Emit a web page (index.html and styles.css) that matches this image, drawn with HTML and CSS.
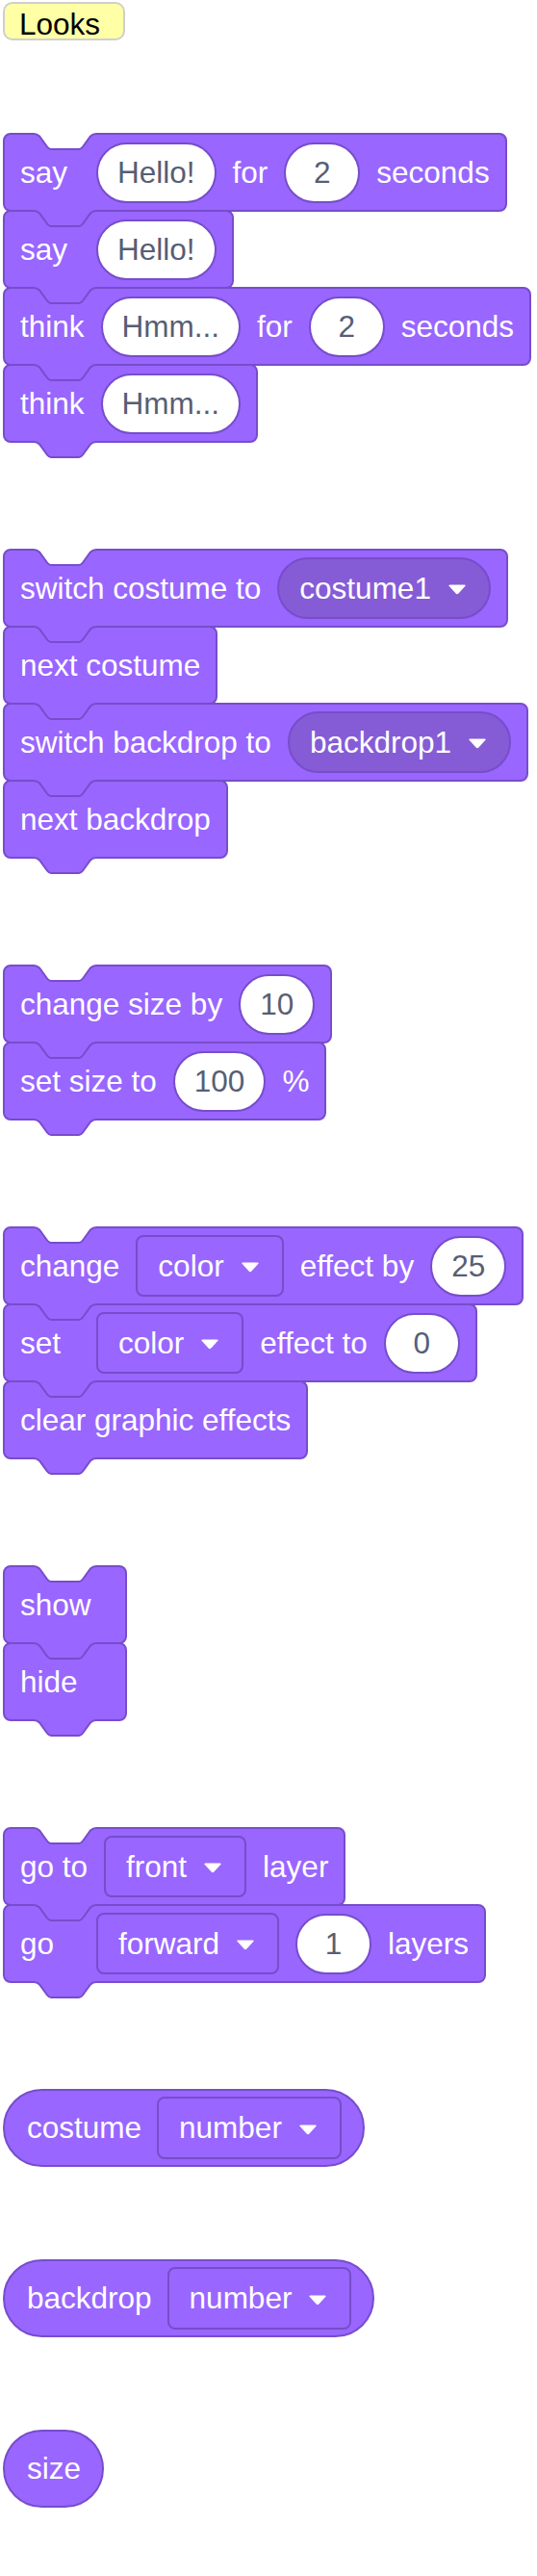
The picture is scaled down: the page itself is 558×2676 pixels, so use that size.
FILE: index.html
```html
<!DOCTYPE html>
<html lang="en">
<head>
<meta charset="utf-8">
<title>Looks</title>
<link rel="stylesheet" href="styles.css">
</head>
<body>
<svg class="defs" width="0" height="0" aria-hidden="true">
  <defs>
    <symbol id="notch" viewBox="0 -2 76 22">
      <path d="M5 -2 L5 1 C8 1 9.5 2 11 3.5 L19 14.5 C20.3 16.3 21 17 23 17 H52 C54 17 54.7 16.3 56 14.5 L64 3.5 C65.5 2 67 1 70 1 L70 -2 Z" fill="#ffffff"/>
      <path d="M4 1 H5 C8 1 9.5 2 11 3.5 L19 14.5 C20.3 16.3 21 17 23 17 H52 C54 17 54.7 16.3 56 14.5 L64 3.5 C65.5 2 67 1 70 1 H71" fill="none" stroke="#774dcb" stroke-width="2"/>
    </symbol>
    <symbol id="tab" viewBox="0 -2 76 22">
      <path d="M5 -1 L5 1 C8 1 9.5 2 11 3.5 L19 14.5 C20.3 16.3 21 17 23 17 H52 C54 17 54.7 16.3 56 14.5 L64 3.5 C65.5 2 67 1 70 1 L70 -1 Z" fill="#9966ff"/>
      <path d="M4 1 H5 C8 1 9.5 2 11 3.5 L19 14.5 C20.3 16.3 21 17 23 17 H52 C54 17 54.7 16.3 56 14.5 L64 3.5 C65.5 2 67 1 70 1 H71" fill="none" stroke="#774dcb" stroke-width="2"/>
    </symbol>
    <symbol id="arrow" viewBox="0 0 20 12">
      <path d="M2.5 1.5 H17.5 Q19.6 1.5 18.2 3.1 L11.4 10.6 Q10 12 8.6 10.6 L1.8 3.1 Q0.4 1.5 2.5 1.5 Z" fill="#ffffff"/>
    </symbol>
  </defs>
</svg>

<div class="page">
  <div class="category">Looks</div>

  <div class="stack">
    <div class="block">
      <svg class="notch"><use href="#notch"/></svg>
      <span class="label lead">say</span>
      <span class="oval">Hello!</span>
      <span class="label">for</span>
      <span class="oval">2</span>
      <span class="label">seconds</span>
      <svg class="tab"><use href="#tab"/></svg>
    </div>
    <div class="block">
      <span class="label lead">say</span>
      <span class="oval">Hello!</span>
      <svg class="tab"><use href="#tab"/></svg>
    </div>
    <div class="block">
      <span class="label lead">think</span>
      <span class="oval">Hmm...</span>
      <span class="label">for</span>
      <span class="oval">2</span>
      <span class="label">seconds</span>
      <svg class="tab"><use href="#tab"/></svg>
    </div>
    <div class="block">
      <span class="label lead">think</span>
      <span class="oval">Hmm...</span>
      <svg class="tab"><use href="#tab"/></svg>
    </div>
  </div>

  <div class="stack">
    <div class="block">
      <svg class="notch"><use href="#notch"/></svg>
      <span class="label lead">switch costume to</span>
      <span class="dd round"><span>costume1</span><svg class="arrow"><use href="#arrow"/></svg></span>
      <svg class="tab"><use href="#tab"/></svg>
    </div>
    <div class="block">
      <span class="label">next costume</span>
      <svg class="tab"><use href="#tab"/></svg>
    </div>
    <div class="block">
      <span class="label lead">switch backdrop to</span>
      <span class="dd round"><span>backdrop1</span><svg class="arrow"><use href="#arrow"/></svg></span>
      <svg class="tab"><use href="#tab"/></svg>
    </div>
    <div class="block">
      <span class="label">next backdrop</span>
      <svg class="tab"><use href="#tab"/></svg>
    </div>
  </div>

  <div class="stack">
    <div class="block">
      <svg class="notch"><use href="#notch"/></svg>
      <span class="label lead">change size by</span>
      <span class="oval">10</span>
      <svg class="tab"><use href="#tab"/></svg>
    </div>
    <div class="block">
      <span class="label lead">set size to</span>
      <span class="oval">100</span>
      <span class="label">%</span>
      <svg class="tab"><use href="#tab"/></svg>
    </div>
  </div>

  <div class="stack">
    <div class="block">
      <svg class="notch"><use href="#notch"/></svg>
      <span class="label lead">change</span>
      <span class="dd"><span>color</span><svg class="arrow"><use href="#arrow"/></svg></span>
      <span class="label">effect by</span>
      <span class="oval">25</span>
      <svg class="tab"><use href="#tab"/></svg>
    </div>
    <div class="block">
      <span class="label lead">set</span>
      <span class="dd"><span>color</span><svg class="arrow"><use href="#arrow"/></svg></span>
      <span class="label">effect to</span>
      <span class="oval">0</span>
      <svg class="tab"><use href="#tab"/></svg>
    </div>
    <div class="block">
      <span class="label">clear graphic effects</span>
      <svg class="tab"><use href="#tab"/></svg>
    </div>
  </div>

  <div class="stack">
    <div class="block">
      <svg class="notch"><use href="#notch"/></svg>
      <span class="label">show</span>
      <svg class="tab"><use href="#tab"/></svg>
    </div>
    <div class="block">
      <span class="label">hide</span>
      <svg class="tab"><use href="#tab"/></svg>
    </div>
  </div>

  <div class="stack">
    <div class="block">
      <svg class="notch"><use href="#notch"/></svg>
      <span class="label lead">go to</span>
      <span class="dd"><span>front</span><svg class="arrow"><use href="#arrow"/></svg></span>
      <span class="label">layer</span>
      <svg class="tab"><use href="#tab"/></svg>
    </div>
    <div class="block">
      <span class="label lead">go</span>
      <span class="dd"><span>forward</span><svg class="arrow"><use href="#arrow"/></svg></span>
      <span class="oval">1</span>
      <span class="label">layers</span>
      <svg class="tab"><use href="#tab"/></svg>
    </div>
  </div>

  <div class="reporter">
    <span class="label">costume</span>
    <span class="dd"><span>number</span><svg class="arrow"><use href="#arrow"/></svg></span>
  </div>

  <div class="reporter">
    <span class="label">backdrop</span>
    <span class="dd"><span>number</span><svg class="arrow"><use href="#arrow"/></svg></span>
  </div>

  <div class="reporter">
    <span class="label">size</span>
  </div>
</div>
</body>
</html>
```

FILE: styles.css
```css
* {
  box-sizing: border-box;
}

body {
  margin: 0;
  background: #ffffff;
  font-family: "Liberation Sans", Arial, sans-serif;
}

.defs {
  position: absolute;
  width: 0;
  height: 0;
  overflow: hidden;
}

.page {
  display: flex;
  flex-direction: column;
  align-items: flex-start;
  padding: 2px 0 0 3px;
}

.category {
  height: 40px;
  padding: 6px 24px 0 15px;
  border: 2px solid #cfcfcf;
  border-radius: 10px;
  background: #ffffa5;
  color: #000000;
  font-size: 31.5px;
  line-height: 30px;
  margin-bottom: 96px;
}

.stack {
  display: flex;
  flex-direction: column;
  align-items: flex-start;
  margin-bottom: 110px;
}

.block {
  position: relative;
  display: flex;
  align-items: center;
  gap: 17px;
  height: 82px;
  min-width: 129px;
  padding: 0 16px;
  background: #9966ff;
  border: 2px solid #774dcb;
  border-radius: 8px;
  color: #ffffff;
  font-size: 31.5px;
  white-space: nowrap;
}

.block + .block {
  margin-top: -2px;
}

.label {
  white-space: nowrap;
}

.lead {
  min-width: 62px;
}

.oval {
  display: flex;
  align-items: center;
  justify-content: center;
  height: 63px;
  min-width: 79px;
  padding: 0 20px;
  background: #ffffff;
  border: 2px solid #774dcb;
  border-radius: 32px;
  color: #575e75;
}

.dd {
  display: flex;
  align-items: center;
  gap: 17px;
  height: 64px;
  padding: 0 23px 0 21px;
  background: #9966ff;
  border: 2px solid #774dcb;
  border-radius: 8px;
  color: #ffffff;
}

.dd.round {
  border-radius: 32px;
  background: #855cd6;
}

.arrow {
  width: 20px;
  height: 12px;
  margin-top: 2px;
  flex: none;
}

.notch,
.tab {
  position: absolute;
  left: 25px;
  width: 76px;
  height: 22px;
  overflow: visible;
}

.notch {
  top: -4px;
  z-index: 1;
}

.tab {
  top: calc(100% - 2px);
  z-index: 2;
}

.reporter {
  display: flex;
  align-items: center;
  gap: 16px;
  height: 81px;
  padding: 0 22px 0 23px;
  background: #9966ff;
  border: 2px solid #774dcb;
  border-radius: 41px;
  color: #ffffff;
  font-size: 31.5px;
  white-space: nowrap;
  margin-bottom: 96px;
}

.reporter .dd {
  height: 65px;
}
```
